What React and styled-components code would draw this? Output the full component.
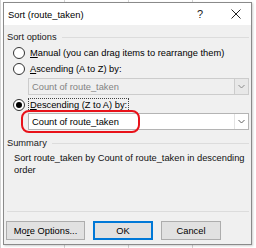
import styled, { createGlobalStyle } from 'styled-components'

const Global = createGlobalStyle`
  html, body { margin: 0; padding: 0; }
  body {
    width: 256px;
    height: 248px;
    overflow: hidden;
    background: #fff;
    font-family: "Liberation Sans", Arial, sans-serif;
    font-size: 9.3px;
    color: #000;
  }
`

const Page = styled.div`
  width: 256px;
  height: 248px;
  padding: 2px 4px 3px 3px;
  box-sizing: border-box;
  background-color: #fff;
  background-image: linear-gradient(90deg, #d4d4d4 1px, transparent 1px);
  background-size: 64px 100%;
`

const Dialog = styled.div`
  height: 243px;
  border: 1px solid #8a8a8a;
  box-sizing: border-box;
  display: flex;
  flex-direction: column;
  background: #f0f0f0;
  box-shadow: 1px 1px 2px rgba(0, 0, 0, 0.2);
`

const TitleBar = styled.div`
  height: 22px;
  background: #fff;
  display: flex;
  align-items: center;
  padding-left: 4px;
  flex-shrink: 0;
`

const Title = styled.span`
  flex: 1;
  font-size: 9.4px;
`

const TitleButton = styled.span`
  width: ${p => p.$w}px;
  display: flex;
  justify-content: center;
  font-size: 11px;
  color: #222;
`

const Body = styled.div`
  flex: 1;
  display: flex;
  flex-direction: column;
  padding: 4px 2px 0 3px;
  white-space: nowrap;
`

const SectionHead = styled.div`
  display: flex;
  align-items: center;
  gap: 5px;
  height: 16px;
  margin-top: ${p => p.$top || 0}px;
  color: #1a1a1a;

  &::after {
    content: '';
    flex: 1;
    height: 1px;
    background: #dcdcdc;
  }
`

const Group = styled.div`
  display: flex;
  flex-direction: column;
  padding-left: 6px;
`

const RadioRow = styled.label`
  display: flex;
  align-items: center;
  gap: 4px;
  height: 16px;
  margin-top: ${p => p.$top || 0}px;
`

const RadioLabel = styled.span`
  padding: 0 1px;
  outline: ${p => (p.$focus ? '1px dotted #444' : 'none')};
  line-height: 12px;
`

const Radio = styled.span`
  width: 10px;
  height: 10px;
  border: 1px solid #333;
  border-radius: 50%;
  background: #fff;
  display: flex;
  align-items: center;
  justify-content: center;
  flex-shrink: 0;

  &::after {
    content: '';
    width: 6px;
    height: 6px;
    border-radius: 50%;
    background: ${p => (p.$checked ? '#000' : 'transparent')};
  }
`

const SelectWrap = styled.div`
  position: relative;
  margin-top: ${p => p.$top || 0}px;
`

const Select = styled.div`
  height: 17px;
  box-sizing: border-box;
  margin-left: 15px;
  border: 1px solid ${p => (p.$disabled ? '#cccccc' : '#b4b4b4')};
  background: ${p => (p.$disabled ? '#efefef' : '#fff')};
  color: ${p => (p.$disabled ? '#838383' : '#000')};
  display: flex;
  align-items: center;
  padding-left: 3px;
`

const SelectText = styled.span`
  flex: 1;
`

const Arrow = styled.span`
  width: 13px;
  height: 15px;
  border-left: 1px solid ${p => (p.$disabled ? '#cccccc' : '#e3e3e3')};
  display: flex;
  align-items: center;
  justify-content: center;
  background: ${p => (p.$disabled ? '#e8e8e8' : '#fff')};
`

const Highlight = styled.div`
  position: absolute;
  left: 8px;
  top: -3px;
  width: 119px;
  height: 23px;
  box-sizing: border-box;
  border: 2px solid #e8121a;
  border-radius: 8px;
  pointer-events: none;
`

const SummaryText = styled.div`
  padding: 1px 0 0 7px;
  line-height: 12px;
  white-space: normal;
  color: #111;
`

const Spacer = styled.div`
  flex: 1;
`

const Separator = styled.div`
  height: 1px;
  background: #dcdcdc;
  margin-bottom: 9px;
`

const Buttons = styled.div`
  display: flex;
  gap: 8px;
  margin-left: -1px;
  margin-bottom: 4px;
`

const Button = styled.button`
  width: ${p => p.$w || 60}px;
  height: 19px;
  box-sizing: border-box;
  font: inherit;
  color: #000;
  background: #e1e1e1;
  border: 1px solid ${p => (p.$default ? '#0078d7' : '#adadad')};
  box-shadow: ${p => (p.$default ? 'inset 0 0 0 1px #0078d7' : 'none')};
  padding: 0;
  white-space: nowrap;
`

function Chevron ({ color }) {
  return (
    <svg width='7' height='5' viewBox='0 0 7 5'>
      <path d='M0.5 1 L3.5 4 L6.5 1' fill='none' stroke={color} strokeWidth='1' />
    </svg>
  )
}

export default function App () {
  return (
    <>
      <Global />
      <Page>
        <Dialog>
          <TitleBar>
            <Title>Sort (route_taken)</Title>
            <TitleButton $w={42}>?</TitleButton>
            <TitleButton $w={30}>
              <svg width='10' height='10' viewBox='0 0 10 10'>
                <path d='M0.5 0.5 L9.5 9.5 M9.5 0.5 L0.5 9.5' stroke='#222' strokeWidth='1' />
              </svg>
            </TitleButton>
          </TitleBar>
          <Body>
            <SectionHead>Sort options</SectionHead>
            <Group>
              <RadioRow>
                <Radio />
                <RadioLabel><u>M</u>anual (you can drag items to rearrange them)</RadioLabel>
              </RadioRow>
              <RadioRow>
                <Radio />
                <RadioLabel><u>A</u>scending (A to Z) by:</RadioLabel>
              </RadioRow>
              <SelectWrap $top={1}>
                <Select $disabled>
                  <SelectText>Count of route_taken</SelectText>
                  <Arrow $disabled><Chevron color='#8a8a8a' /></Arrow>
                </Select>
              </SelectWrap>
              <RadioRow $top={2}>
                <Radio $checked />
                <RadioLabel $focus><u>D</u>escending (Z to A) by:</RadioLabel>
              </RadioRow>
              <SelectWrap>
                <Select>
                  <SelectText>Count of route_taken</SelectText>
                  <Arrow><Chevron color='#606060' /></Arrow>
                </Select>
                <Highlight />
              </SelectWrap>
            </Group>
            <SectionHead $top={5}>Summary</SectionHead>
            <SummaryText>
              Sort route_taken by Count of route_taken in descending order
            </SummaryText>
            <Spacer />
            <Separator />
            <Buttons>
              <Button $w={79}>Mo<u>r</u>e Options...</Button>
              <Button $default>OK</Button>
              <Button>Cancel</Button>
            </Buttons>
          </Body>
        </Dialog>
      </Page>
    </>
  )
}
